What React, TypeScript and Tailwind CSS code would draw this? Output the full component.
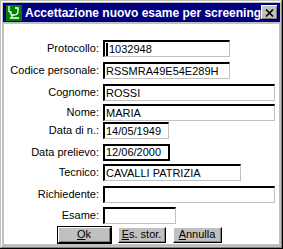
import React from 'react';

const font = { fontFamily: '"Liberation Sans", Arial, sans-serif' };

type Row = {
  label: string;
  value: string;
  width: string;
  mt: string;
  kind?: 'flat';
  caret?: boolean;
};

const rows: Row[] = [
  { label: 'Protocollo:', value: '1032948', width: 'w-[127px]', mt: 'mt-0', caret: true },
  { label: 'Codice personale:', value: 'RSSMRA49E54E289H', width: 'w-[127px]', mt: 'mt-[5px]' },
  { label: 'Cognome:', value: 'ROSSI', width: 'w-[172px]', mt: 'mt-[5px]' },
  { label: 'Nome:', value: 'MARIA', width: 'w-[172px]', mt: 'mt-[3px]' },
  { label: 'Data di n.:', value: '14/05/1949', width: 'w-[66px]', mt: 'mt-[1px]' },
  { label: 'Data prelievo:', value: '12/06/2000', width: 'w-[67px]', mt: 'mt-[5px]', kind: 'flat' },
  { label: 'Tecnico:', value: 'CAVALLI PATRIZIA', width: 'w-[138px]', mt: 'mt-[3px]' },
  { label: 'Richiedente:', value: '', width: 'w-[172px]', mt: 'mt-[5px]' },
  { label: 'Esame:', value: '', width: 'w-[73px]', mt: 'mt-[4px]' },
];

function Field({ row }: { row: Row }) {
  const border =
    row.kind === 'flat'
      ? 'border-2 border-black'
      : 'border-t-2 border-l-2 border-t-[#000] border-l-[#000] border-r border-b border-r-[#c0c0c0] border-b-[#c0c0c0]';
  return (
    <div className={`${row.width} h-[17px] bg-white ${border} flex items-center pl-[1px] overflow-hidden`}>
      {row.caret && <span className="w-[2px] h-[13px] bg-black mr-[1px]" />}
      <span className="text-[11px] leading-none text-black whitespace-nowrap">{row.value}</span>
    </div>
  );
}

function Button({ children, primary }: { children: React.ReactNode; primary?: boolean }) {
  return (
    <div className={primary ? 'border border-black' : 'border border-transparent'}>
      <div className="h-[16px] bg-[#c0c0c0] border-t border-l border-t-white border-l-white border-r border-b border-r-black border-b-black flex items-center justify-center">
        <div className="h-full w-full border-r border-b border-r-[#808080] border-b-[#808080] flex items-center justify-center text-[11px] text-black leading-none">
          {children}
        </div>
      </div>
    </div>
  );
}

export default function App() {
  return (
    <div style={font} className="w-[283px] h-[249px] bg-[#c0c0c0] p-[3px] shadow-[inset_-1px_-1px_#000,inset_1px_1px_#c0c0c0,inset_-2px_-2px_#808080,inset_2px_2px_#fff] flex flex-col">
      <div className="h-[19px] bg-[#000080] flex items-center pl-[3px] pr-[2px]">
        <svg width="16" height="16" viewBox="0 0 16 16" className="shrink-0">
          <rect width="16" height="16" fill="#008000" />
          <path d="M3 1v6M3 7h2v3M5 10h3M8 10c3 0 4-2 4-4M9 3h3v3M4 13h9M6 10v3" stroke="#fff" strokeWidth="1.3" fill="none" />
        </svg>
        <span className="ml-[3px] text-[12px] font-bold text-white leading-none whitespace-nowrap">
          Accettazione nuovo esame per screening
        </span>
        <div className="ml-auto w-[17px] h-[15px] bg-[#c0c0c0] shadow-[inset_-1px_-1px_#000,inset_1px_1px_#fff,inset_-2px_-2px_#808080] flex items-center justify-center">
          <svg width="9" height="8" viewBox="0 0 9 8">
            <path d="M1 0.5l7 7M8 0.5l-7 7" stroke="#000" strokeWidth="1.6" />
          </svg>
        </div>
      </div>
      <div className="mt-[2px] flex-1 bg-white mx-[1px] mb-[2px] pt-[16px] flex flex-col">
        {rows.map((row) => (
          <div key={row.label} className={`${row.mt} flex items-center`}>
            <div className="w-[96px] text-right text-[11px] text-black leading-none whitespace-nowrap pr-[1px]">
              {row.label}
            </div>
            <div className="ml-[3px]">
              <Field row={row} />
            </div>
          </div>
        ))}
        <div className="mt-[2px] flex pl-[53px] gap-[5px]">
          <div className="w-[55px]">
            <Button primary>
              <span className="underline">O</span>k
            </Button>
          </div>
          <div className="w-[50px]">
            <Button>
              <span className="underline">E</span>s. stor.
            </Button>
          </div>
          <div className="w-[51px]">
            <Button>
              <span className="underline">A</span>nnulla
            </Button>
          </div>
        </div>
      </div>
    </div>
  );
}
